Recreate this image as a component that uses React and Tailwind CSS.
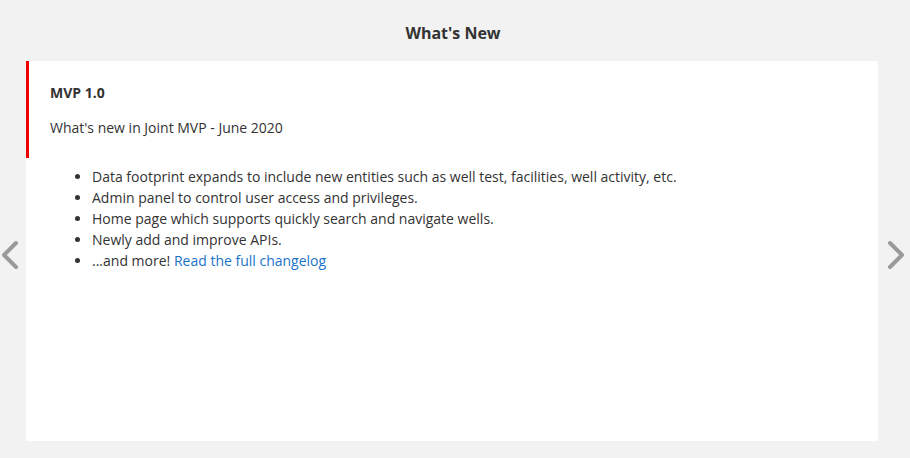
import React from 'react';

const items = [
    'Data footprint expands to include new entities such as well test, facilities, well activity, etc.',
    'Admin panel to control user access and privileges.',
    'Home page which supports quickly search and navigate wells.',
    'Newly add and improve APIs.',
];

const Chevron = ({ dir }) => (
    <svg width="22" height="32" viewBox="0 0 22 32" className="block">
        <polyline
            points={dir === 'left' ? '16,4 4,16 16,28' : '6,4 18,16 6,28'}
            fill="none"
            stroke="#9a9a9a"
            strokeWidth="4"
            strokeLinecap="round"
            strokeLinejoin="round"
        />
    </svg>
);

const App = () => {
    return (
        <div className="relative w-[910px] h-[458px] bg-[#f2f2f2] text-[#333] font-['Open_Sans',sans-serif] overflow-hidden">
            <div className="h-[61px] flex items-center justify-center pr-[4px]">
                <h2 className="text-[16px] font-bold leading-none mt-[4px]">What's New</h2>
            </div>

            <div className="ml-[26px] mr-[32px] h-[380px] bg-white">
                <div className="border-l-[3px] border-[#ee0000] pl-[21px] pt-[21px] pb-[20px]">
                    <h4 className="text-[14px] font-bold leading-[21px] mb-[14px]">MVP 1.0</h4>
                    <p className="text-[14px] leading-[21px]">What's new in Joint MVP - June 2020</p>
                </div>
                <ul className="list-disc pl-[66px] pt-[8px] text-[14px] leading-[21px]">
                    {items.map((t) => (
                        <li key={t}>{t}</li>
                    ))}
                    <li>
                        ...and more! <a href="#" className="text-[#1a73c9]">Read the full changelog</a>
                    </li>
                </ul>
            </div>

            <button className="absolute left-[0px] top-[239px]">
                <Chevron dir="left" />
            </button>
            <button className="absolute left-[884px] top-[239px]">
                <Chevron dir="right" />
            </button>
        </div>
    );
};

export default App;
